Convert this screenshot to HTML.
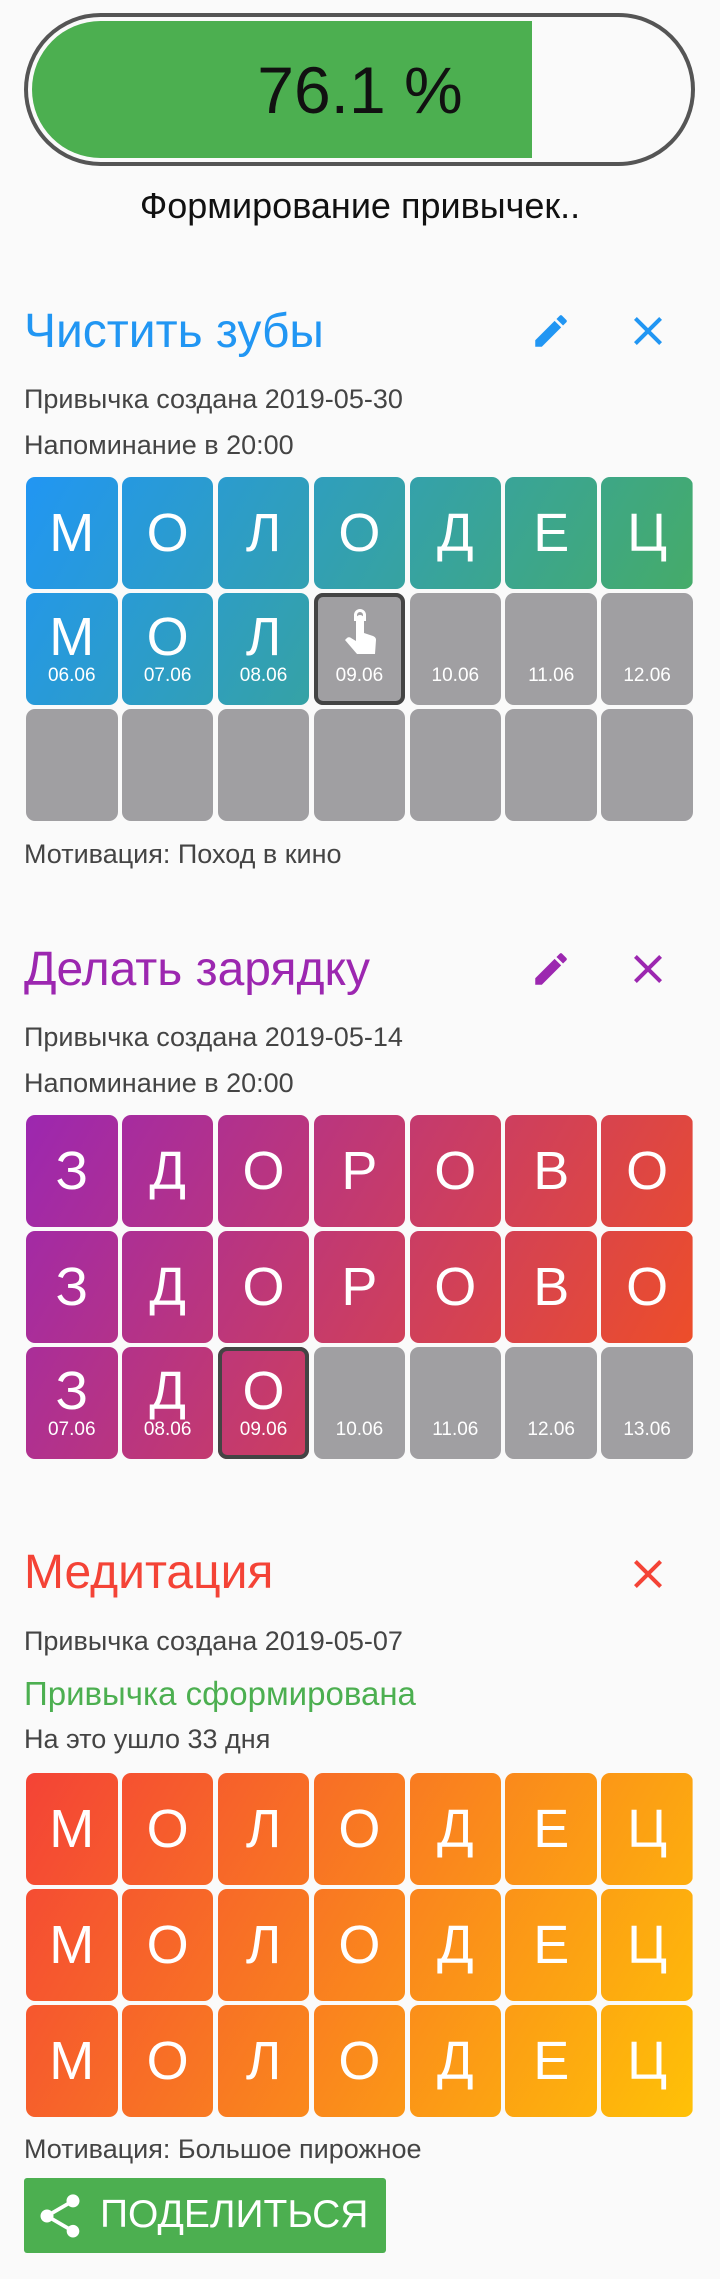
<!DOCTYPE html>
<html><head><meta charset="utf-8">
<style>
*{margin:0;padding:0;box-sizing:border-box}
body{width:720px;height:2279px;background:#fafafa;font-family:"Liberation Sans","DejaVu Sans",sans-serif;position:relative;overflow:hidden}
.a{position:absolute;white-space:nowrap}
.bar{left:24px;top:13px;width:671px;height:153px;border:4px solid #555;border-radius:77px;overflow:hidden;background:#fafafa}
.fill{position:absolute;left:4px;top:4px;bottom:4px;width:500px;background:#4caf50;border-radius:70px 0 0 70px}
.pct{left:0;width:720px;text-align:center;top:52px;font-size:66px;color:#111}
.t{font-size:48px;left:24px}
.info{font-size:27px;color:#444;left:24px}
.grid{position:absolute;left:26px;width:667px;display:grid;grid-template-columns:repeat(7,91.5px);grid-auto-rows:112px;column-gap:4.4px;row-gap:4px}
.c{border-radius:9px;position:relative;color:#fff;text-align:center;background-size:667px 344px}
.c b{display:block;font-size:54px;line-height:112px;font-weight:normal}
.c.d b{line-height:88px}
.c i{position:absolute;left:0;right:0;top:72px;font-style:normal;font-size:19px}
.g{background:#a09fa2 !important}
.sel{box-shadow:inset 0 0 0 4px #444}
.c:nth-child(7n+1){background-position-x:0}
.c:nth-child(7n+2){background-position-x:-95.9px}
.c:nth-child(7n+3){background-position-x:-191.8px}
.c:nth-child(7n+4){background-position-x:-287.7px}
.c:nth-child(7n+5){background-position-x:-383.6px}
.c:nth-child(7n+6){background-position-x:-479.5px}
.c:nth-child(7n+7){background-position-x:-575.4px}
.c:nth-child(n+8){background-position-y:-116px}
.c:nth-child(n+15){background-position-y:-232px}
.g1 .c{background-image:linear-gradient(120deg,#2196f3,#4caf50)}
.g2 .c{background-image:linear-gradient(120deg,#9c27b0,#f4511e)}
.g3 .c{background-image:linear-gradient(120deg,#f44336,#ffc107)}
</style></head><body>

<div class="a bar"><div class="fill"></div></div>
<div class="a pct">76.1 %</div>
<div class="a" style="left:0;width:720px;text-align:center;top:185px;font-size:36px;color:#111">Формирование привычек..</div>

<!-- section 1 -->
<div class="a t" style="top:304px;color:#2196f3">Чистить зубы</div>
<svg class="a" style="left:530px;top:310px" width="42" height="42" viewBox="0 0 24 24"><path fill="#2196f3" d="M3 17.25V21h3.75L17.81 9.94l-3.75-3.75L3 17.25zM20.71 7.04a1 1 0 0 0 0-1.41l-2.34-2.34a1 1 0 0 0-1.41 0l-1.83 1.83 3.75 3.75 1.83-1.83z"/></svg>
<svg class="a" style="left:624px;top:307px" width="48" height="48" viewBox="0 0 24 24"><path fill="#2196f3" d="M19 6.41L17.59 5 12 10.59 6.41 5 5 6.41 10.59 12 5 17.59 6.41 19 12 13.41 17.59 19 19 17.59 13.41 12z"/></svg>
<div class="a info" style="top:384px">Привычка создана 2019-05-30</div>
<div class="a info" style="top:430px">Напоминание в 20:00</div>
<div class="grid g1" style="top:477px">
<div class="c"><b>М</b></div><div class="c"><b>О</b></div><div class="c"><b>Л</b></div><div class="c"><b>О</b></div><div class="c"><b>Д</b></div><div class="c"><b>Е</b></div><div class="c"><b>Ц</b></div>
<div class="c d"><b>М</b><i>06.06</i></div><div class="c d"><b>О</b><i>07.06</i></div><div class="c d"><b>Л</b><i>08.06</i></div>
<div class="c d g sel"><svg style="position:absolute;left:28px;top:16px" width="36" height="50" viewBox="0 0 36 50"><path fill="#fff" d="M12 6a6 6 0 0 1 12 0v6h-3V6a3 3 0 0 0-6 0v6h-3z"/><path fill="#fff" d="M14 10a4 4 0 0 1 8 0v14l9 3c2 1 3 2 3 4l-1 14H15L3 31l2-2c1-1 3-1 4 0l5 3z"/></svg><i>09.06</i></div>
<div class="c d g"><i>10.06</i></div><div class="c d g"><i>11.06</i></div><div class="c d g"><i>12.06</i></div>
<div class="c g"></div><div class="c g"></div><div class="c g"></div><div class="c g"></div><div class="c g"></div><div class="c g"></div><div class="c g"></div>
</div>
<div class="a info" style="top:839px">Мотивация: Поход в кино</div>

<!-- section 2 -->
<div class="a t" style="top:942px;color:#9c27b0">Делать зарядку</div>
<svg class="a" style="left:530px;top:948px" width="42" height="42" viewBox="0 0 24 24"><path fill="#9c27b0" d="M3 17.25V21h3.75L17.81 9.94l-3.75-3.75L3 17.25zM20.71 7.04a1 1 0 0 0 0-1.41l-2.34-2.34a1 1 0 0 0-1.41 0l-1.83 1.83 3.75 3.75 1.83-1.83z"/></svg>
<svg class="a" style="left:624px;top:945px" width="48" height="48" viewBox="0 0 24 24"><path fill="#9c27b0" d="M19 6.41L17.59 5 12 10.59 6.41 5 5 6.41 10.59 12 5 17.59 6.41 19 12 13.41 17.59 19 19 17.59 13.41 12z"/></svg>
<div class="a info" style="top:1022px">Привычка создана 2019-05-14</div>
<div class="a info" style="top:1068px">Напоминание в 20:00</div>
<div class="grid g2" style="top:1115px">
<div class="c"><b>З</b></div><div class="c"><b>Д</b></div><div class="c"><b>О</b></div><div class="c"><b>Р</b></div><div class="c"><b>О</b></div><div class="c"><b>В</b></div><div class="c"><b>О</b></div>
<div class="c"><b>З</b></div><div class="c"><b>Д</b></div><div class="c"><b>О</b></div><div class="c"><b>Р</b></div><div class="c"><b>О</b></div><div class="c"><b>В</b></div><div class="c"><b>О</b></div>
<div class="c d"><b>З</b><i>07.06</i></div><div class="c d"><b>Д</b><i>08.06</i></div><div class="c d sel"><b>О</b><i>09.06</i></div>
<div class="c d g"><i>10.06</i></div><div class="c d g"><i>11.06</i></div><div class="c d g"><i>12.06</i></div><div class="c d g"><i>13.06</i></div>
</div>

<!-- section 3 -->
<div class="a t" style="top:1545px;color:#f44336">Медитация</div>
<svg class="a" style="left:624px;top:1550px" width="48" height="48" viewBox="0 0 24 24"><path fill="#f44336" d="M19 6.41L17.59 5 12 10.59 6.41 5 5 6.41 10.59 12 5 17.59 6.41 19 12 13.41 17.59 19 19 17.59 13.41 12z"/></svg>
<div class="a info" style="top:1626px">Привычка создана 2019-05-07</div>
<div class="a" style="left:24px;top:1675px;font-size:33px;color:#4caf50">Привычка сформирована</div>
<div class="a info" style="top:1724px">На это ушло 33 дня</div>
<div class="grid g3" style="top:1773px">
<div class="c"><b>М</b></div><div class="c"><b>О</b></div><div class="c"><b>Л</b></div><div class="c"><b>О</b></div><div class="c"><b>Д</b></div><div class="c"><b>Е</b></div><div class="c"><b>Ц</b></div>
<div class="c"><b>М</b></div><div class="c"><b>О</b></div><div class="c"><b>Л</b></div><div class="c"><b>О</b></div><div class="c"><b>Д</b></div><div class="c"><b>Е</b></div><div class="c"><b>Ц</b></div>
<div class="c"><b>М</b></div><div class="c"><b>О</b></div><div class="c"><b>Л</b></div><div class="c"><b>О</b></div><div class="c"><b>Д</b></div><div class="c"><b>Е</b></div><div class="c"><b>Ц</b></div>
</div>
<div class="a info" style="top:2134px">Мотивация: Большое пирожное</div>
<div class="a" style="left:24px;top:2178px;width:362px;height:75px;background:#4caf50;border-radius:3px"></div>
<svg class="a" style="left:34px;top:2190px" width="52" height="52" viewBox="0 0 24 24"><path fill="#fff" d="M18 16.08c-.76 0-1.440.3-1.96.77L8.91 12.7c.05-.23.09-.46.09-.7s-.04-.47-.09-.7l7.05-4.11c.54.5 1.25.81 2.04.81 1.66 0 3-1.34 3-3s-1.34-3-3-3-3 1.34-3 3c0 .24.04.47.09.7L8.04 9.810C7.5 9.31 6.79 9 6 9c-1.66 0-3 1.34-3 3s1.34 3 3 3c.79 0 1.5-.31 2.04-.81l7.12 4.16c-.05.21-.08.43-.08.65 0 1.61 1.310 2.92 2.92 2.92s2.92-1.31 2.92-2.92-1.31-2.92-2.92-2.92z"/></svg>
<div class="a" style="left:100px;top:2193px;font-size:39px;color:#fff">ПОДЕЛИТЬСЯ</div>
</body></html>
